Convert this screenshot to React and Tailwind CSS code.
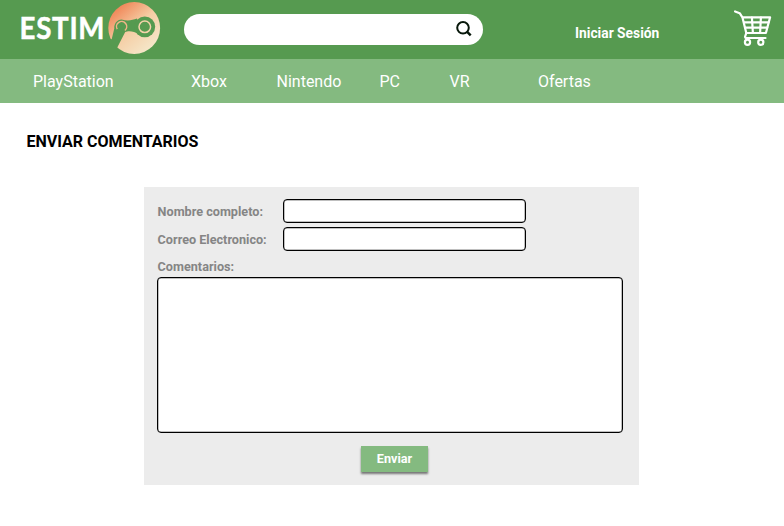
const NAV = [
  ['PlayStation', 'w-[158px]'],
  ['Xbox', 'w-[85.5px]'],
  ['Nintendo', 'w-[103px]'],
  ['PC', 'w-[70px]'],
  ['VR', 'w-[88.5px]'],
  ['Ofertas', 'w-[80px]'],
];

function Logo() {
  return (
    <svg className="block h-[59px] w-[170px]" viewBox="0 0 170 59" role="img" aria-label="Estim">
      <defs>
        <linearGradient id="disc" x1="0.1" y1="0.1" x2="0.8" y2="0.95">
          <stop offset="0" stopColor="#f07f50" />
          <stop offset="0.5" stopColor="#f5cda4" />
          <stop offset="1" stopColor="#f5e8cb" />
        </linearGradient>
      </defs>
      <text x="19.6" y="38.8" fill="#fff" stroke="#fff" strokeWidth="0.5" fontFamily="Lato, sans-serif" fontWeight="700" fontSize="31" letterSpacing="0.8" textLength="85.6" lengthAdjust="spacingAndGlyphs">ESTIM</text>
      <circle cx="134.2" cy="28" r="25.9" fill="url(#disc)" />
      <path d="M114.3 28.5C113.8 24 117 19.5 121.5 19.5C128 21.2 132 20.3 137 18.5L139 34.5C135 31.5 131 31 128 31.3L125.2 32L117 48L111 45L107 38.5L111.7 39.2Z" fill="#569a50" />
      <circle cx="144.8" cy="26.8" r="10.4" fill="#569a50" />
      <circle cx="144.8" cy="26.8" r="5.8" fill="none" stroke="#f5d3aa" strokeWidth="1.5" />
      <path d="M117.2 29.2A5.1 5.1 0 1 1 124.9 30.5" fill="none" stroke="#f3b588" strokeWidth="1.5" />
    </svg>
  );
}

function SearchIcon() {
  return (
    <svg className="size-4" viewBox="0 0 16 16" fill="none" stroke="#07170a" strokeWidth="2">
      <circle cx="7" cy="6.8" r="5.8" />
      <path d="m10.7 10.3 4 4" strokeWidth="2.5" />
    </svg>
  );
}

function CartIcon() {
  return (
    <svg className="block h-[38px] w-10" viewBox="0 0 40 38" fill="none" stroke="#fff" strokeWidth="2.2" strokeLinecap="round" strokeLinejoin="round">
      <path d="M2.1 2.4 6.7 4.2 9.4 8.3H37.1L32.9 24H13.3L9.4 8.3" />
      <path d="M13.3 24 12.1 27.5Q11.9 29 13.5 29H32.5" />
      <path d="M11 13.4H35.5M12.5 18.6H34.2M18.9 8.5 19.9 24M27.9 8.5 27.1 24" />
      <circle cx="14.5" cy="33.2" r="2.6" />
      <circle cx="27.8" cy="33.2" r="2.6" />
    </svg>
  );
}

export default function App() {
  return (
    <div className="h-[526px] w-[784px] overflow-hidden bg-white font-[Roboto,sans-serif]">
      <header className="flex h-[59px] items-start bg-[#569a50]">
        <Logo />
        <div className="mt-[14px] ml-[14px] flex h-[31px] w-[299px] items-center justify-end rounded-full bg-white pr-[11px] pb-[2px]">
          <SearchIcon />
        </div>
        <a className="mt-[23px] ml-[92px] w-[158px] text-[13.8px] leading-[21px] font-bold whitespace-nowrap text-white">Iniciar Sesión</a>
        <div className="mt-[9px]"><CartIcon /></div>
      </header>
      <nav className="flex h-11 items-center bg-[#84ba80] pt-[2px] pl-[33px] text-[16px] leading-6 text-white">
        {NAV.map(([label, width]) => (
          <a key={label} className={`${width} shrink-0 whitespace-nowrap`}>{label}</a>
        ))}
      </nav>
      <main>
        <h1 className="pt-[27px] pl-[26.4px] text-[16.05px] leading-6 font-bold text-black">ENVIAR COMENTARIOS</h1>
        <form className="mt-[33px] ml-[144px] flex h-[298px] w-[495px] flex-col bg-[#ececec] pt-[12px] pl-[13px] text-[12.65px] font-bold text-[#858585]">
          <label className="flex h-[24px] items-center">
            <span className="w-[126px] pt-[2px] pl-[0.6px]">Nombre completo:</span>
            <input className="h-[24px] w-[243px] rounded-[4px] border border-black bg-white inset-shadow-[0_0_0_0.5px_rgba(0,0,0,0.5)]" />
          </label>
          <label className="mt-[4px] flex h-[24px] items-center">
            <span className="w-[126px] pt-[2px] pl-[0.6px]">Correo Electronico:</span>
            <input className="h-[24px] w-[243px] rounded-[4px] border border-black bg-white inset-shadow-[0_0_0_0.5px_rgba(0,0,0,0.5)]" />
          </label>
          <label className="mt-[6px] block pl-[0.6px] leading-5" htmlFor="comments">Comentarios:</label>
          <textarea id="comments" className="block h-[156px] w-[466px] resize-none rounded-[4px] border border-black bg-white inset-shadow-[0_0_0_0.5px_rgba(0,0,0,0.5)]" />
          <button type="button" className="mt-[13px] ml-[204px] h-[26px] w-[67px] bg-[#84ba80] text-[12.65px] text-white shadow-[0_2px_2px_rgba(0,0,0,0.5)]">Enviar</button>
        </form>
      </main>
    </div>
  );
}
